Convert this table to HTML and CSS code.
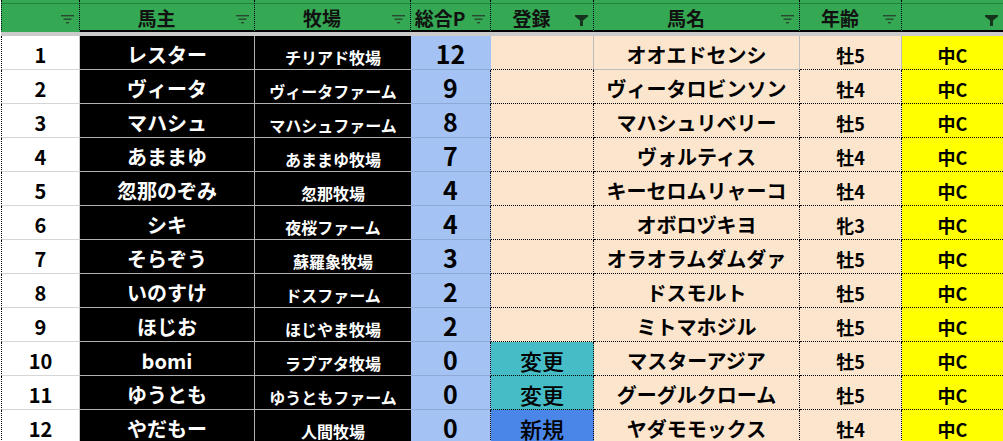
FILE: index.html
```html
<!DOCTYPE html>
<html lang="ja">
<head>
<meta charset="utf-8">
<title>馬主一覧</title>
<link rel="stylesheet" href="styles.css">
</head>
<body>
<div class="sheet">
  <div class="hdr">
    <div class="h ca"><span class="lbl"></span><svg class="ic" viewBox="0 0 13 10"><rect x="0" y="0" width="13" height="1.4"/><rect x="2.5" y="3.5" width="8" height="1.4"/><rect x="5" y="7" width="3" height="1.4"/></svg></div>
    <div class="h cb"><span class="lbl">馬主</span><svg class="ic" viewBox="0 0 13 10"><rect x="0" y="0" width="13" height="1.4"/><rect x="2.5" y="3.5" width="8" height="1.4"/><rect x="5" y="7" width="3" height="1.4"/></svg></div>
    <div class="h cc"><span class="lbl">牧場</span><svg class="ic" viewBox="0 0 13 10"><rect x="0" y="0" width="13" height="1.4"/><rect x="2.5" y="3.5" width="8" height="1.4"/><rect x="5" y="7" width="3" height="1.4"/></svg></div>
    <div class="h cd"><span class="lbl">総合P</span><svg class="ic" viewBox="0 0 13 10"><rect x="0" y="0" width="13" height="1.4"/><rect x="2.5" y="3.5" width="8" height="1.4"/><rect x="5" y="7" width="3" height="1.4"/></svg></div>
    <div class="h ce"><span class="lbl">登録</span><svg class="ic act" viewBox="0 0 13 11"><path d="M0 0H13V1.5L8 5.5V11H5V5.5L0 1.5Z"/></svg></div>
    <div class="h cf"><span class="lbl">馬名</span><svg class="ic" viewBox="0 0 13 10"><rect x="0" y="0" width="13" height="1.4"/><rect x="2.5" y="3.5" width="8" height="1.4"/><rect x="5" y="7" width="3" height="1.4"/></svg></div>
    <div class="h cg"><span class="lbl">年齢</span><svg class="ic" viewBox="0 0 13 10"><rect x="0" y="0" width="13" height="1.4"/><rect x="2.5" y="3.5" width="8" height="1.4"/><rect x="5" y="7" width="3" height="1.4"/></svg></div>
    <div class="h ch"><span class="lbl"></span><svg class="ic act" viewBox="0 0 13 11"><path d="M0 0H13V1.5L8 5.5V11H5V5.5L0 1.5Z"/></svg></div>
  </div>
  <div class="band"></div>

  <div class="row first">
    <div class="c ca">1</div><div class="c cb">レスター</div><div class="c cc">チリアド牧場</div><div class="c cd">12</div>
    <div class="c ce"></div><div class="c cf">オオエドセンシ</div><div class="c cg">牡5</div><div class="c ch">中C</div>
  </div>
  <div class="row">
    <div class="c ca">2</div><div class="c cb">ヴィータ</div><div class="c cc">ヴィータファーム</div><div class="c cd">9</div>
    <div class="c ce"></div><div class="c cf">ヴィータロビンソン</div><div class="c cg">牡4</div><div class="c ch">中C</div>
  </div>
  <div class="row">
    <div class="c ca">3</div><div class="c cb">マハシュ</div><div class="c cc">マハシュファーム</div><div class="c cd">8</div>
    <div class="c ce"></div><div class="c cf">マハシュリベリー</div><div class="c cg">牡5</div><div class="c ch">中C</div>
  </div>
  <div class="row">
    <div class="c ca">4</div><div class="c cb">あままゆ</div><div class="c cc">あままゆ牧場</div><div class="c cd">7</div>
    <div class="c ce"></div><div class="c cf">ヴォルティス</div><div class="c cg">牡4</div><div class="c ch">中C</div>
  </div>
  <div class="row">
    <div class="c ca">5</div><div class="c cb">忽那のぞみ</div><div class="c cc">忽那牧場</div><div class="c cd">4</div>
    <div class="c ce"></div><div class="c cf">キーセロムリャーコ</div><div class="c cg">牡4</div><div class="c ch">中C</div>
  </div>
  <div class="row">
    <div class="c ca">6</div><div class="c cb">シキ</div><div class="c cc">夜桜ファーム</div><div class="c cd">4</div>
    <div class="c ce"></div><div class="c cf">オボロヅキヨ</div><div class="c cg">牝3</div><div class="c ch">中C</div>
  </div>
  <div class="row">
    <div class="c ca">7</div><div class="c cb">そらぞう</div><div class="c cc">蘇羅象牧場</div><div class="c cd">3</div>
    <div class="c ce"></div><div class="c cf">オラオラムダムダァ</div><div class="c cg">牡5</div><div class="c ch">中C</div>
  </div>
  <div class="row">
    <div class="c ca">8</div><div class="c cb">いのすけ</div><div class="c cc">ドスファーム</div><div class="c cd">2</div>
    <div class="c ce"></div><div class="c cf">ドスモルト</div><div class="c cg">牡5</div><div class="c ch">中C</div>
  </div>
  <div class="row">
    <div class="c ca">9</div><div class="c cb">ほじお</div><div class="c cc">ほじやま牧場</div><div class="c cd">2</div>
    <div class="c ce"></div><div class="c cf">ミトマホジル</div><div class="c cg">牡5</div><div class="c ch">中C</div>
  </div>
  <div class="row">
    <div class="c ca">10</div><div class="c cb">bomi</div><div class="c cc">ラブアタ牧場</div><div class="c cd">0</div>
    <div class="c ce chg">変更</div><div class="c cf">マスターアジア</div><div class="c cg">牡5</div><div class="c ch">中C</div>
  </div>
  <div class="row">
    <div class="c ca">11</div><div class="c cb">ゆうとも</div><div class="c cc">ゆうともファーム</div><div class="c cd">0</div>
    <div class="c ce chg">変更</div><div class="c cf">グーグルクローム</div><div class="c cg">牡5</div><div class="c ch">中C</div>
  </div>
  <div class="row">
    <div class="c ca">12</div><div class="c cb">やだもー</div><div class="c cc">人間牧場</div><div class="c cd">0</div>
    <div class="c ce new">新規</div><div class="c cf">ヤダモモックス</div><div class="c cg">牡4</div><div class="c ch">中C</div>
  </div>
</div>
</body>
</html>
```

FILE: styles.css
```css
* { box-sizing: border-box; }
html, body { margin: 0; padding: 0; background: #ffffff; }
body {
  font-family: "Noto Sans CJK JP", "Noto Sans", sans-serif;
  width: 1003px;
  height: 441px;
  overflow: hidden;
}
.sheet { padding-left: 1px; width: 1003px; }

.hdr, .row {
  display: grid;
  grid-template-columns: 79px 175px 156px 80px 103px 206px 102px 1fr;
}

/* header */
.h {
  height: 32px;
  display: flex;
  align-items: center;
  padding-top: 5px;
  background: linear-gradient(#23813c, #23813c) 0 3px / 100% 1px no-repeat, #34a853;
  border-right: 1px dotted #000;
  border-bottom: 2px solid #000;
  font-size: 19px;
  font-weight: 700;
  color: #111;
}
.h.ca { border-left: 1px dotted #000; border-bottom-color: #34a853; }
.h.ch { border-right: none; }
.h .lbl { flex: 1; text-align: center; line-height: 22px; }
.h .ic {
  width: 13px;
  height: 10px;
  margin: 5px 5px 0 3px;
  fill: #27492f;
}
.h .ic.act { height: 11px; fill: #15331d; }

.band { height: 4px; background: #cbcbcb; }

/* body */
.c {
  height: 34px;
  display: flex;
  align-items: center;
  justify-content: center;
  font-weight: 700;
  font-size: 20px;
  padding-top: 4px;
  color: #000;
  white-space: nowrap;
}
.c.ca {
  background: #fff;
  border-left: 1px dotted #000;
  border-right: 1px solid #c6c6c6;
  border-bottom: 1px solid #d6d6d6;
}
.c.cb {
  background: #000;
  color: #fff;
  border-right: 1px solid #b0b0b0;
  border-bottom: 1px solid #b0b0b0;
}
.c.cc {
  background: #000;
  color: #fff;
  font-size: 16px;
  padding-top: 9px;
  border-bottom: 1px solid #b0b0b0;
}
.c.cd {
  background: #a4c2f4;
  font-size: 25px;
  padding-top: 1px;
  border-right: 1px dotted #000;
  border-bottom: 1px solid #90aad8;
}
.c.ce {
  background: #fce5cd;
  font-weight: 500;
  font-size: 22px;
  padding-top: 2px;
  border-right: 1px dotted #000;
  border-bottom: 1px dotted #000;
}
.c.ce.chg { background: #46bdc6; }
.c.ce.new { background: #4a86e8; }
.c.cf {
  background: #fce5cd;
  border-right: 1px dotted #000;
  border-bottom: 1px dotted #000;
}
.c.cg {
  background: #fce5cd;
  font-size: 18px;
  border-right: 1px dotted #000;
  border-bottom: 1px dotted #000;
}
.c.ch {
  background: #ffff00;
  font-size: 18px;
  border-bottom: 1px dotted #000;
}

/* first row: light gridlines on the right block */
.row.first .c.cd { border-right-color: #a4c2f4; }
.row.first .c.ce { border-right: 1px solid #bdbdbd; }
.row.first .c.cf { border-right: 1px solid #bdbdbd; border-bottom: 1px solid #bdbdbd; }
.row.first .c.cg { border-right: 1px solid #bdbdbd; }
```
